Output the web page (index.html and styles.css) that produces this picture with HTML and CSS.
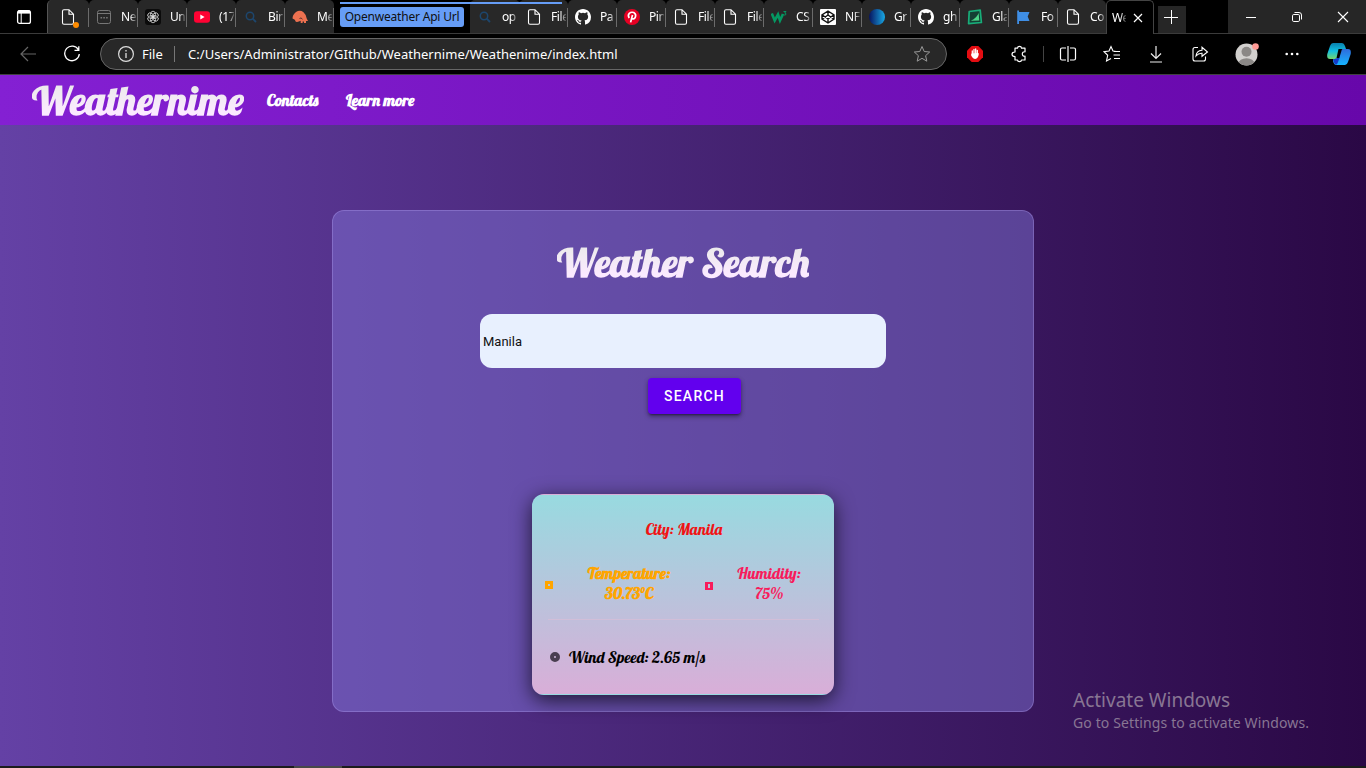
FILE: index.html
```html
<!DOCTYPE html>
<html lang="en">
<head>
<meta charset="utf-8">
<title>Weathernime</title>
<link rel="stylesheet" href="styles.css">
</head>
<body>
<svg class="defs" aria-hidden="true">
  <symbol id="file" viewBox="0 0 16 16"><path d="M2.5 2.2Q2.5.7 4 .7H9L13.5 5.2V13.8Q13.5 15.3 12 15.3H4Q2.5 15.3 2.5 13.8ZM9 .7V5.2H13.5" fill="none" stroke="#fff" stroke-width="1.1"/></symbol>
  <symbol id="github" viewBox="0 0 16 16"><path fill="#fff" d="M8 0C3.58 0 0 3.58 0 8c0 3.54 2.29 6.53 5.47 7.59.4.07.55-.17.55-.38v-1.49c-2.01.37-2.53-.49-2.69-.94-.09-.23-.48-.94-.82-1.13-.28-.15-.68-.52-.01-.53.63-.01 1.08.58 1.23.82.72 1.21 1.87.87 2.33.66.07-.52.28-.87.51-1.07-1.78-.2-3.64-.89-3.64-3.95 0-.87.31-1.59.82-2.15-.08-.2-.36-1.02.08-2.12 0 0 .67-.21 2.2.82a7.6 7.6 0 0 1 4 0c1.53-1.04 2.2-.82 2.2-.82.44 1.1.16 1.92.08 2.12.51.56.82 1.27.82 2.15 0 3.07-1.87 3.75-3.65 3.95.29.25.54.73.54 1.48v2.2c0 .21.15.46.55.38A8 8 0 0 0 16 8c0-4.42-3.58-8-8-8Z"/></symbol>
  <symbol id="search" viewBox="0 0 16 16"><circle cx="7" cy="7" r="3.7" fill="none" stroke="#1d466d" stroke-width="1.5"/><path d="M9.7 9.7L13 13" stroke="#1d466d" stroke-width="1.8"/></symbol>
</svg>
<header class="browser">
  <div class="tabs">
    <div class="workspace"><svg width="16" height="16" viewBox="0 0 16 16"><rect x="1.6" y="1.6" width="12.8" height="12.8" rx="2" fill="none" stroke="#fff" stroke-width="1.3"/><path d="M2 3H14" stroke="#fff" stroke-width="3.2"/><path d="M5.2 4V14" stroke="#fff"/></svg></div>
    <div class="tab pinned"><svg><use href="#file"/></svg><i class="dot"></i></div>
    <div class="tab"><svg viewBox="0 0 16 16" fill="none" stroke="#777"><rect x="1.5" y="1.5" width="13" height="13" rx="2"/><path d="M2 4.5H14"/><path d="M4.5 8.7H12" stroke-width="1.6" stroke-dasharray="1.6 1.2"/></svg><span>Ne</span></div>
    <div class="tab"><svg viewBox="0 0 16 16"><rect width="16" height="16" rx="3" fill="#0b0b0b"/><g fill="none" stroke="#ddd" stroke-width=".8"><ellipse cx="8" cy="5.4" rx="2.5" ry="3.2" id="petal"/><use href="#petal" transform="rotate(60 8 8)"/><use href="#petal" transform="rotate(120 8 8)"/><use href="#petal" transform="rotate(180 8 8)"/><use href="#petal" transform="rotate(240 8 8)"/><use href="#petal" transform="rotate(300 8 8)"/></g></svg><span>Un</span></div>
    <div class="tab"><svg viewBox="0 0 16 16"><rect y="2.3" width="16" height="11.4" rx="3" fill="#ff0233"/><path d="M6.3 5.5V10.5L10.6 8Z" fill="#fff"/></svg><span>(17</span></div>
    <div class="tab"><svg><use href="#search"/></svg><span>Bin</span></div>
    <div class="tab last"><svg viewBox="0 0 16 16"><path d="M.5 9.5Q.5 5.6 4 3Q8 .5 11.5 3.2Q14.4 5.7 14.7 9.6L16 12H14V14H12V12.4H10.6V14H8.7V11.8Q6 13.4 3.8 12.8L2.8 10.8Z" fill="#ed7150"/><path d="M7.5 9.5Q9 8 10.5 10.2" fill="none" stroke="#5a332d"/></svg><span>Me</span></div>
    <div class="group"><b>Openweather Api Url</b></div>
    <div class="tab search"><svg><use href="#search"/></svg><span>op</span></div>
    <div class="tab"><svg><use href="#file"/></svg><span>File</span></div>
    <div class="tab"><svg><use href="#github"/></svg><span>Pa</span></div>
    <div class="tab"><svg viewBox="0 0 16 16"><circle cx="8" cy="8" r="8" fill="#e60023"/><path d="M5.2 9Q3.5 6 5.3 4.3Q7.2 2.7 9.7 3.5Q12.6 5.2 11.2 8.5Q9.6 10.9 7.6 9.2M8.5 6L6.6 13.4" fill="none" stroke="#fff" stroke-width="1.7"/></svg><span>Pin</span></div>
    <div class="tab"><svg><use href="#file"/></svg><span>File</span></div>
    <div class="tab"><svg><use href="#file"/></svg><span>File</span></div>
    <div class="tab"><svg viewBox="0 0 16 16"><path d="M.8 4.5L3.7 11.5L7 5.5L9 11.5L12 5" fill="none" stroke="#059862" stroke-width="2.6"/><path d="M12.5 2.5H15L13.7 4Q15.5 4.2 14.7 5.8Q13.7 6.5 12.5 5.5" fill="none" stroke="#059862"/></svg><span>CS</span></div>
    <div class="tab"><svg viewBox="0 0 16 16"><rect width="16" height="16" rx="1" fill="#fff"/><path d="M8 2L14 5.8V10.2L8 14L2 10.2V5.8ZM8 2V6M8 10V14M2 5.8L8 10L14 5.8M2 10.2L8 6L14 10.2" fill="none" stroke="#111" stroke-width="1.4"/></svg><span>NF</span></div>
    <div class="tab"><svg viewBox="0 0 16 16"><defs><linearGradient id="gr"><stop stop-color="#07135f"/><stop offset="1" stop-color="#18a8e4"/></linearGradient></defs><circle cx="8" cy="8" r="8" fill="url(#gr)"/></svg><span>Gr</span></div>
    <div class="tab"><svg><use href="#github"/></svg><span>gh</span></div>
    <div class="tab"><svg viewBox="0 0 16 16"><path d="M2.2 2.5L13.2 1.2L14.4 13.5L1.6 14.7Z" fill="#143f34" stroke="#18ad79" stroke-width="1.7" stroke-linejoin="round"/><path d="M3.8 11.7Q10 9 11.6 4L12.3 11.5Z" fill="#4cd487"/></svg><span>Gla</span></div>
    <div class="tab"><svg viewBox="0 0 16 16"><path d="M1.2 1.5H3V3H13.5L11.7 7.5L13.5 12H3V15H1.2Z" fill="#3f8ee5"/></svg><span>Fo</span></div>
    <div class="tab last c"><svg><use href="#file"/></svg><span>Co</span></div>
    <div class="tab active"><span>We</span><svg viewBox="0 0 10 10"><path d="M1 1L9 9M9 1L1 9" stroke="#fff" stroke-width="1.2"/></svg></div>
    <div class="plus"><svg width="14" height="14"><path d="M7.5 0V14M0 7.5H14" stroke="#fff"/></svg></div>
    <div class="winctl">
      <svg width="12" height="12"><path d="M1 6.5H11" stroke="#fff"/></svg>
      <svg width="12" height="12" fill="none" stroke="#fff"><rect x="1.5" y="3.5" width="7" height="7" rx="1.3"/><path d="M3.5 1.5H8Q10.5 1.5 10.5 4V8.5"/></svg>
      <svg width="12" height="12"><path d="M1 1L11 11M11 1L1 11" stroke="#fff" stroke-width="1.1"/></svg>
    </div>
    <i class="group-line"></i>
  </div>
  <div class="toolbar">
    <svg class="back" width="16" height="16" fill="none" stroke="#666" stroke-width="1.2"><path d="M16 8H1M8 1L1 8L8 15"/></svg>
    <svg class="reload" width="18" height="18" fill="none" stroke="#fff" stroke-width="1.3"><path d="M15.5 5A7.3 7.3 0 1 0 16.3 9M15.8 1.2V5.4H11.5"/></svg>
    <div class="address">
      <svg width="18" height="18"><circle cx="9" cy="9" r="7.4" fill="none" stroke="#ddd" stroke-width="1.2"/><path d="M9 8V13M9 5V6.5" stroke="#ddd" stroke-width="1.3"/></svg>
      <span class="scheme">File</span><i></i><span class="url">C:/Users/Administrator/GIthub/Weathernime/Weathenime/index.html</span>
      <svg class="star" width="18" height="18"><path d="M9 1.5L11.2 6.5L16.7 7L12.6 10.7L13.8 16.2L9 13.3L4.2 16.2L5.4 10.7L1.3 7L6.8 6.5Z" fill="none" stroke="#999"/></svg>
    </div>
    <div class="tools">
      <svg viewBox="0 0 18 18"><path d="M5.7 1H12.3L17 5.7V12.3L12.3 17H5.7L1 12.3V5.7Z" fill="#e40d12"/><path d="M6.3 9V6M8 9V4.3M9.7 9V4M11.3 9V5.5" stroke="#fff" stroke-width="1.3" stroke-linecap="round"/><path d="M5.6 8.5L11.9 8L12.9 8.6Q12.2 14 9.2 14Q6.7 14 5 10Z" fill="#fff"/></svg>
      <svg class="puzzle" viewBox="0 0 18 18" fill="none" stroke="#fff" stroke-width="1.2" stroke-linejoin="round"><path d="M5 3.2H7.5Q7.6 1.3 9.5 1.3Q11.4 1.3 11.5 3.2H15V6.8Q12.3 6.5 12.3 9Q12.3 11.5 15 11.2V15H11.5Q11.4 16.7 9.5 16.7Q7.6 16.7 7.5 15H5V11.5Q2 11.5 2 9.2Q2 7 5 7Z"/></svg>
      <i></i>
      <svg viewBox="0 0 18 18" fill="none" stroke="#fff" stroke-width="1.2"><path d="M7 3H3Q1.5 3 1.5 4.5V13.5Q1.5 15 3 15H7M11 3H15Q16.5 3 16.5 4.5V13.5Q16.5 15 15 15H11M9 1V17"/></svg>
      <svg viewBox="0 0 18 18" fill="none" stroke="#fff" stroke-width="1.1"><path d="M13 6.5L10 6L8 1.5L6 6L1 6.7L4.7 10.3L3.5 16L8 13.5M11 6.5H17M10.5 10H17M11 13.5H17"/></svg>
      <svg viewBox="0 0 18 18" fill="none" stroke="#eee" stroke-width="1.2"><path d="M9 1V13M4 8.5L9 13.5L14 8.5M3 17H15"/></svg>
      <svg viewBox="0 0 18 18" fill="none" stroke="#fff" stroke-width="1.1"><path d="M7 2.5H4Q2 2.5 2 4.5V14Q2 16 4 16H12.5Q14.5 16 14.5 14V11.5M5 11Q5.5 5.5 11 5.2V2.3L16.5 7L11 11.3V8.3Q7.5 8 5 11Z"/></svg>
      <svg class="avatar" viewBox="0 0 24 24"><defs><clipPath id="avc"><circle cx="11.5" cy="12.5" r="11"/></clipPath></defs><circle cx="11.5" cy="12.5" r="11" fill="#d2d0ce"/><g clip-path="url(#avc)" fill="#8b8886"><circle cx="11.5" cy="9.7" r="5"/><ellipse cx="11.5" cy="21.5" rx="8" ry="5.2"/></g><circle cx="20.5" cy="4.5" r="3.3" fill="#ff9b96"/></svg>
      <svg viewBox="0 0 18 18" fill="#fff"><circle cx="3.7" cy="9" r="1.3"/><circle cx="9" cy="9" r="1.3"/><circle cx="14.3" cy="9" r="1.3"/></svg>
      <svg class="copilot" viewBox="0 0 24 24"><defs><linearGradient id="c1" x2="0" y2="1"><stop stop-color="#087fae"/><stop offset=".5" stop-color="#12bfe2"/><stop offset="1" stop-color="#74d66f"/></linearGradient><linearGradient id="c2" x2="0" y2="1"><stop stop-color="#2f6bdc"/><stop offset="1" stop-color="#15b4ff"/></linearGradient></defs><path d="M6 1H15Q17 1 18 4L19 7H14L11 15Q10 17 8 17H3Q-.5 17 .3 12L3 4Q4 1 6 1Z" fill="url(#c1)"/><path d="M16 7H21Q24.5 7 23.7 12L21 20Q20 23 18 23H9Q7 23 6 19V17H8Q10 17 11 14L13 9Q14 7 16 7Z" fill="url(#c2)"/><path d="M6 17H8Q10 17 11 15L12.5 16L11 20Q10.3 22.5 9 22.8Q7 22 6 17Z" fill="#153bc9"/><path d="M11.5 7H15L12.3 16H9.5Z" fill="#000"/></svg>
    </div>
  </div>
</header>
<nav class="nav"><span class="brand"><span class="grad">Weathernime</span></span><a class="contacts">Contacts</a><a class="learn">Learn more</a></nav>
<main class="page">
  <section class="panel">
    <h1 class="grad">Weather Search</h1>
    <div class="field">Manila</div>
    <button>SEARCH</button>
    <article class="weather">
      <div class="city">City: Manila</div>
      <div class="stats">
        <i class="ico sun"></i><p class="temp">Temperature:<br><span>30.73°C</span></p>
        <i class="ico drop"></i><p class="hum">Humidity:<br>75%</p>
      </div>
      <div class="wind"><i></i><span>Wind Speed: 2.65 m/s</span></div>
    </article>
  </section>
  <aside class="activate"><div>Activate Windows</div><p>Go to Settings to activate Windows.</p></aside>
</main>
<footer class="taskbar"><i></i></footer>
</body>
</html>
```
FILE: styles.css
```css
* { box-sizing: border-box; }
body { margin: 0; width: 1366px; height: 768px; overflow: hidden; display: flex; flex-direction: column; font-family: "Segoe UI", "Noto Sans", sans-serif; background: #000; }
p, h1 { margin: 0; }
i { display: block; font-style: normal; }
svg { flex: none; display: block; }
.defs { position: absolute; width: 0; height: 0; }

.browser { height: 75px; color: #fff; border-bottom: 1px solid #414141; flex: none; }
.tabs { height: 34px; display: flex; position: relative; border-bottom: 1px solid #3b3b3b; }
.workspace { width: 47px; display: flex; align-items: center; padding-left: 16px; }
.tab { width: 49px; background: #282828; display: flex; align-items: center; padding-left: 7px; font-size: 12px; position: relative; border-radius: 5px 5px 0 0; flex: none; }
.tab svg { width: 16px; height: 16px; }
.tab span { width: 15px; margin-left: 9px; overflow: hidden; white-space: nowrap; letter-spacing: -.4px; -webkit-mask-image: linear-gradient(90deg, #000 60%, rgba(0,0,0,.2)); mask-image: linear-gradient(90deg, #000 60%, rgba(0,0,0,.2)); }
.tab::after { content: ""; position: absolute; right: 0; top: 8px; width: 1px; height: 19px; background: #6b6b6b; }
.tab.pinned { width: 42px; padding-left: 12px; border-left: 1px solid #555; }
.dot { position: absolute; left: 25px; top: 22px; width: 6px; height: 6px; border-radius: 50%; background: #ff8c00; }
.group { width: 136px; padding: 7px 6px; flex: none; }
.group b { display: block; width: 124px; height: 20px; background: #669df6; color: #101010; border-radius: 3px; font-size: 12px; font-weight: 400; line-height: 20px; text-align: center; white-space: nowrap; letter-spacing: -.2px; }
.group-line { position: absolute; left: 340px; top: 2px; width: 222px; height: 2px; background: #669df6; }
.tab.c { width: 48px; }
.tab.c::after { display: none; }
.tab.search { width: 50px; margin-right: -1px; }
.tab.active { background: #000; width: 48px; height: 34px; padding-left: 5px; border: 1px solid #444; border-bottom: 0; }
.tab.active::after { display: none; }
.tab.active span { margin: 0; width: 14px; }
.tab.active svg { width: 10px; height: 10px; margin-left: 7px; }
.plus { width: 28px; height: 27px; margin: 6px 42px 0 4px; background: #262626; display: flex; align-items: center; justify-content: center; flex: none; padding: 0 2px 5px 0; }
.winctl { flex: 1; background: #262626; display: flex; justify-content: space-between; align-items: center; padding: 0 17px; }

.toolbar { height: 40px; display: flex; align-items: center; }
.back { margin-left: 20px; }
.reload { margin-left: 27px; }
.address { margin-left: 19px; width: 847px; height: 32px; border: 1px solid #666; border-radius: 16px; background: #282828; display: flex; align-items: center; padding: 0 15px 0 16px; font-size: 13px; }
.address i { width: 1px; height: 16px; background: #777; margin: 0 13px 0 11px; }
.scheme { margin-left: 7px; width: 21px; white-space: nowrap; }
.url { white-space: nowrap; letter-spacing: .03px; }
.star { margin-left: auto; }
.tools { flex: 1; display: flex; align-items: center; padding-left: 19px; }
.tools svg { width: 18px; height: 18px; margin-right: 26px; }
.tools i { width: 1px; height: 16px; background: #444; margin: 0 15px 0 -11px; }
.tools .avatar { width: 24px; height: 24px; margin: 0 24px 0 0; }
.tools .copilot { width: 24px; height: 24px; margin: 0; }

.nav, h1, .weather { font-family: Lobster, "Liberation Serif", serif; }
.nav { height: 50px; flex: none; display: flex; align-items: center; padding-left: 32px; background: linear-gradient(90deg, #8420d3, #6707aa); color: #fff; font-size: 16px; font-weight: 700; white-space: nowrap; }
.grad { background: linear-gradient(#eaeaea 15%, #fbeaff 75%); -webkit-background-clip: text; background-clip: text; color: transparent; }
.brand { width: 235px; font-size: 40px; line-height: 50px; }
.contacts { width: 79px; }

.page { flex: 1; position: relative; display: flex; justify-content: center; align-items: flex-start; padding-top: 85px; background: linear-gradient(90deg, #6441a5, #2a0845); }
.panel { width: 702px; height: 502px; border: 1px solid rgba(180,160,240,.35); border-radius: 12px; background: rgba(129,117,215,.48); display: flex; flex-direction: column; align-items: center; }
h1 { margin-top: 26px; height: 50px; line-height: 50px; font-size: 40px; white-space: nowrap; }
.field { margin-top: 27px; width: 406px; height: 54px; border-radius: 12px; background: #e8f0fe; color: #111; font: 13px/55px Roboto, sans-serif; padding-left: 3px; }
button { margin: 10px 0 0 23px; width: 93px; height: 36px; padding: 0; border: 0; border-radius: 4px; background: #6200ee; color: #fff; font: 500 14px Roboto, sans-serif; letter-spacing: 1.25px; box-shadow: 0 3px 1px -2px rgba(0,0,0,.2), 0 2px 2px rgba(0,0,0,.14), 0 1px 5px rgba(0,0,0,.12), 0 3px 5px rgba(0,0,0,.25); }
.weather { margin-top: 80px; width: 302px; height: 201px; border: 1px solid transparent; border-radius: 12px; background: linear-gradient(#98dae0, #d9aed8); box-shadow: 0 5px 20px rgba(0,0,0,.7); font-size: 16px; line-height: 20px; color: #000; white-space: nowrap; }
.city { text-align: center; margin-top: 24px; padding-left: 2px; color: #f01414; }
.stats { margin: 24px 14px 0 15px; height: 57px; padding-bottom: 16px; display: flex; align-items: center; border-bottom: 1px solid rgba(215,190,215,.75); text-align: center; }
.ico { width: 8px; height: 8px; border: 3px solid currentColor; flex: none; }
.sun { color: #ffa500; margin: 4px 0 0 -3px; }
.drop { color: #f81b5b; border-width: 2px 3px; margin: 5px 0 0 34px; }
.temp { width: 84px; margin-left: 34px; color: #ffa500; font-weight: 700; }
.hum { width: 64px; margin-left: 24px; color: #f81b5b; }
.wind { margin: 27px 0 0 17px; display: flex; align-items: center; }
.wind i { width: 10px; height: 10px; border: 4px solid #493e50; border-radius: 50%; margin-right: 9px; }
.activate { position: absolute; left: 1073px; top: 561px; color: #887693; white-space: nowrap; }
.activate div { font-size: 19px; line-height: 28px; }
.activate p { font-size: 14px; line-height: 18px; letter-spacing: .12px; }
.taskbar { height: 2px; flex: none; background: #1c1c1c; }
.taskbar i { width: 48px; height: 2px; margin-left: 294px; background: #484848; }
```
